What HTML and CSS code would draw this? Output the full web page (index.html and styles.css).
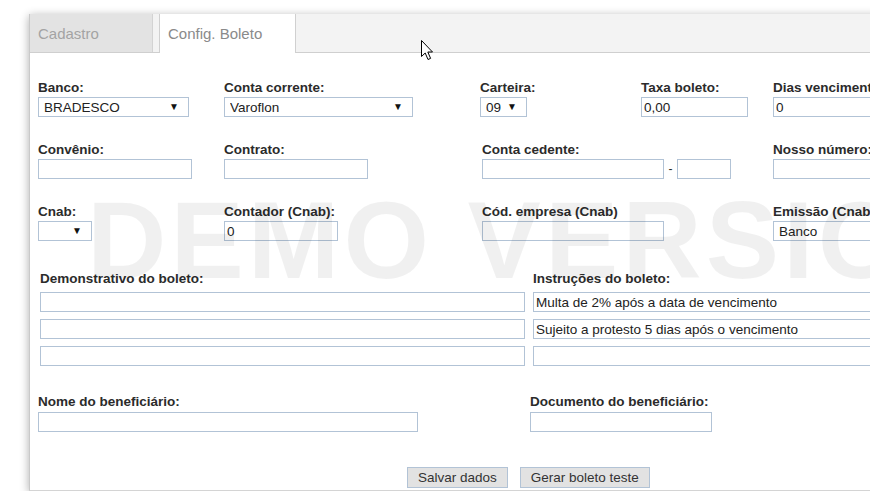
FILE: index.html
```html
<!DOCTYPE html>
<html lang="pt-BR">
<head>
    <meta charset="UTF-8">
    <title>Config. Boleto</title>
    <link rel="stylesheet" href="styles.css">
</head>
<body>
    <div class="panel">
        <!-- Tabs -->
        <div class="tabs">
            <div class="tab">Cadastro</div>
            <div class="tab active">Config. Boleto</div>
        </div>

        <div class="content">
            <!-- Main fields -->
            <div class="grid">
                <div class="field">
                    <label>Banco:</label>
                    <div class="select w-banco"><select><option>BRADESCO</option></select></div>
                </div>
                <div class="field">
                    <label>Conta corrente:</label>
                    <div class="select w-conta"><select><option>Varoflon</option></select></div>
                </div>
                <div class="field shift-l">
                    <label>Carteira:</label>
                    <div class="select w-carteira"><select><option>09</option></select></div>
                </div>
                <div class="field">
                    <label>Taxa boleto:</label>
                    <input type="text" class="w-taxa" value="0,00">
                </div>
                <div class="field">
                    <label>Dias vencimento:</label>
                    <input type="text" class="w-wide" value="0">
                </div>

                <div class="field">
                    <label>Convênio:</label>
                    <input type="text" class="w-convenio">
                </div>
                <div class="field">
                    <label>Contrato:</label>
                    <input type="text" class="w-contrato">
                </div>
                <div class="field span2">
                    <label>Conta cedente:</label>
                    <div class="pair">
                        <input type="text" class="w-cedente">
                        <span class="dash">-</span>
                        <input type="text" class="w-digito">
                    </div>
                </div>
                <div class="field">
                    <label>Nosso número:</label>
                    <input type="text" class="w-wide">
                </div>

                <div class="field">
                    <label>Cnab:</label>
                    <div class="select w-cnab"><select><option></option></select></div>
                </div>
                <div class="field">
                    <label>Contador (Cnab):</label>
                    <input type="text" class="w-contador" value="0">
                </div>
                <div class="field span2">
                    <label>Cód. empresa (Cnab)</label>
                    <input type="text" class="w-cedente">
                </div>
                <div class="field">
                    <label>Emissão (Cnab):</label>
                    <div class="select w-wide"><select><option>Banco</option></select></div>
                </div>
            </div>

            <!-- Texts printed on the boleto -->
            <div class="texts">
                <div class="lines">
                    <label>Demonstrativo do boleto:</label>
                    <input type="text">
                    <input type="text">
                    <input type="text">
                </div>
                <div class="lines">
                    <label>Instruções do boleto:</label>
                    <input type="text" value="Multa de 2% após a data de vencimento">
                    <input type="text" value="Sujeito a protesto 5 dias após o vencimento">
                    <input type="text">
                </div>
            </div>

            <!-- Beneficiary -->
            <div class="benef">
                <div class="field">
                    <label>Nome do beneficiário:</label>
                    <input type="text" class="w-nome">
                </div>
                <div class="field">
                    <label>Documento do beneficiário:</label>
                    <input type="text" class="w-cedente">
                </div>
            </div>

            <div class="actions">
                <button>Salvar dados</button>
                <button>Gerar boleto teste</button>
            </div>
        </div>

        <div class="watermark">DEMO VERSION</div>

        <svg class="cursor" width="14" height="22" viewBox="0 0 14 22">
            <path d="M1.5 1.5 L1.5 17.5 L5.2 14 L8 20.5 L10.6 19.4 L7.8 13 L12.5 13 Z" fill="#fff" stroke="#000" stroke-width="1" stroke-linejoin="round"/>
        </svg>
    </div>
</body>
</html>
```

FILE: styles.css
```css
body {
    margin: 0;
    background: #fff;
    font-family: "Liberation Sans", Arial, sans-serif;
    font-size: 13.5px;
    color: #2b2b2b;
    overflow: hidden;
}
.panel {
    position: relative;
    width: 1000px;
    margin: 14px 0 0 29px;
    border-left: 1px solid #c9c9c9;
    border-bottom: 1px solid #d4d4d4;
    background: #fff;
    box-shadow: 0 2px 9px rgba(0, 0, 0, 0.33);
    overflow: hidden;
}
.tabs {
    display: flex;
    height: 38px;
    background: #f3f3f3;
    border-bottom: 1px solid #cfcfcf;
}
.tab {
    width: 114px;
    padding-left: 8px;
    line-height: 39px;
    font-size: 15px;
    color: #a3a3a3;
    background: #e3e3e3;
    border-right: 1px solid #d3d3d3;
    margin-right: 6px;
}
.tab.active {
    width: 127px;
    padding-left: 8px;
    height: 39px;
    color: #8a8a8a;
    background: #fff;
    border-left: 1px solid #d0d0d0;
    border-right: 1px solid #d0d0d0;
}
.content {
    padding: 27px 0 2px 8px;
}
label {
    display: block;
    font-weight: bold;
    line-height: 16px;
    margin-bottom: 1px;
    white-space: nowrap;
}
input,
select,
button {
    font-family: "Liberation Sans", Arial, sans-serif;
    font-size: 13.5px;
    color: #222;
}
input {
    display: block;
    box-sizing: border-box;
    height: 20px;
    margin: 0;
    padding: 0 2px;
    border: 1px solid #b2c3d6;
    background: transparent;
    width: 100%;
}
.grid {
    display: grid;
    grid-template-columns: 186px 258px 159px 132px 1fr;
    row-gap: 25px;
}
.span2 {
    grid-column: span 2;
}
.shift-l {
    margin-left: -2px;
}
.select {
    position: relative;
    box-sizing: border-box;
    height: 20px;
    border: 1px solid #b2c3d6;
}
.select select {
    appearance: none;
    -webkit-appearance: none;
    width: 100%;
    height: 18px;
    border: none;
    background: transparent;
    padding: 0 0 0 5px;
    outline: none;
}
.select::after {
    content: "\25BC";
    position: absolute;
    right: 9px;
    top: 3px;
    font-size: 10px;
    color: #111;
}
.w-banco { width: 151px; }
.w-conta { width: 189px; }
.w-carteira { width: 47px; }
.w-taxa { width: 107px; }
.w-wide { width: 150px; }
.w-convenio { width: 154px; }
.w-contrato { width: 144px; }
.w-cedente { width: 182px; }
.w-digito { width: 54px; }
.w-cnab { width: 54px; }
.w-contador { width: 114px; }
.w-nome { width: 380px; }
.pair {
    display: flex;
    align-items: center;
}
.dash {
    width: 13px;
    text-align: center;
    font-size: 12px;
}
.texts {
    display: grid;
    grid-template-columns: 485px 1fr;
    column-gap: 8px;
    margin: 30px 0 0 2px;
}
.lines label {
    margin-bottom: 5px;
}
.lines input + input {
    margin-top: 7px;
}
.benef {
    display: grid;
    grid-template-columns: 492px 1fr;
    margin-top: 28px;
}
.benef label {
    margin-bottom: 2px;
}
.actions {
    display: flex;
    gap: 12px;
    margin-top: 35px;
    padding-left: 369px;
}
button {
    height: 21px;
    padding: 0 10px;
    background: #e2e2e2;
    border: 1px solid #b2c3d6;
    color: #333;
}
.watermark {
    position: absolute;
    left: 57px;
    top: 162px;
    font-size: 110px;
    font-weight: bold;
    letter-spacing: 4px;
    color: rgba(0, 0, 0, 0.06);
    white-space: nowrap;
    pointer-events: none;
}
.cursor {
    position: absolute;
    left: 390px;
    top: 25px;
}
```
